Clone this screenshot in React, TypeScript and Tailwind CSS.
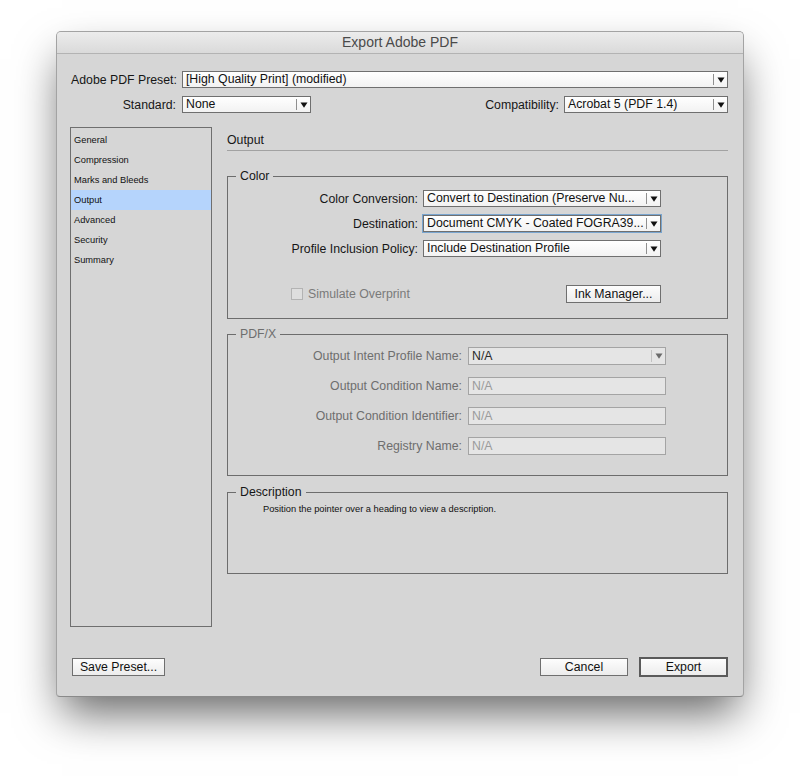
import clsx from "clsx";

const sans = "font-['Liberation_Sans',Arial,sans-serif]";

const sections = ["General", "Compression", "Marks and Bleeds", "Output", "Advanced", "Security", "Summary"];

function Arrow({ muted }: { muted?: boolean }) {
  return (
    <svg width="8" height="6" viewBox="0 0 8 6" className={muted ? "fill-[#6a6a6a]" : "fill-[#111111]"}>
      <path d="M0.5 0.5h7L4 5.8z" />
    </svg>
  );
}

function Select({
  value,
  className,
  focused,
  disabled,
}: {
  value: string;
  className?: string;
  focused?: boolean;
  disabled?: boolean;
}) {
  return (
    <div
      className={clsx(
        "flex items-stretch border",
        disabled
          ? "h-[18px] border-[#a4a4a4] bg-[#e5e5e5]"
          : "h-[17px] border-[#6f6f6f] bg-gradient-to-b from-white to-[#f2f2f2]",
        focused && "border-[#3e6d9c] shadow-[0_0_0_1px_#79a5cf]",
        className
      )}
    >
      <span
        className={clsx(
          "flex-1 truncate pl-[3px] text-[12.3px]",
          disabled ? "leading-[16px] text-[#2a2a2a]" : "leading-[15px] text-[#111111]"
        )}
      >
        {value}
      </span>
      <span className={clsx("my-[2px] w-px", disabled ? "bg-[#c2c2c2]" : "bg-[#8f8f8f]")} />
      <span className="flex w-[13px] items-center justify-center">
        <Arrow muted={disabled} />
      </span>
    </div>
  );
}

function Field({ value }: { value: string }) {
  return (
    <div className="h-[18px] w-[198px] border border-[#a4a4a4] bg-[#e5e5e5] pl-[3px] text-[12.3px] leading-[16px] text-[#9b9b9b]">
      {value}
    </div>
  );
}

function Button({ label, className, primary }: { label: string; className?: string; primary?: boolean }) {
  return (
    <button
      className={clsx(
        "flex items-center justify-center bg-gradient-to-b from-[#fdfdfd] to-[#ececec] text-[12.3px] text-[#111111]",
        primary ? "h-[20px] border-2 border-[#5a5a5a]" : "h-[18px] border border-[#6f6f6f]",
        className
      )}
    >
      {label}
    </button>
  );
}

export default function App() {
  return (
    <div className={clsx("min-h-[776px] bg-white pl-[56px] pt-[31px]", sans)}>
      <div className="w-[688px] overflow-hidden rounded-t-[5px] rounded-b-[4px] border border-[#a3a3a3] border-b-[#8a8a8a] bg-[#d6d6d6] shadow-[0_22px_42px_-6px_rgba(0,0,0,0.6)]">
        {/* Title bar */}
        <div className="flex h-[22px] items-center justify-center border-b border-[#b3b3b3] bg-gradient-to-b from-[#ececec] to-[#dadada] text-[14px] text-[#4a4a4a]">
          Export Adobe PDF
        </div>

        <div className="whitespace-nowrap pl-[14px] pr-[15px] pt-[17px] pb-[19px] text-[12.3px] leading-[16px] text-[#161616]">
          {/* Preset */}
          <div className="flex items-center gap-[5px]">
            <span className="shrink-0">Adobe PDF Preset:</span>
            <Select value="[High Quality Print] (modified)" className="flex-1" />
          </div>

          <div className="mt-[8px] flex items-center">
            <span className="w-[105px] text-right">Standard:</span>
            <Select value="None" className="ml-[6px] w-[129px]" />
            <span className="ml-auto">Compatibility:</span>
            <Select value="Acrobat 5 (PDF 1.4)" className="ml-[5px] w-[164px]" />
          </div>

          {/* Main */}
          <div className="-ml-[1px] mt-[14px] flex gap-[15px]">
            <div className="h-[500px] w-[142px] shrink-0 border border-[#6f6f6f] pt-[2px]">
              {sections.map((s) => (
                <div
                  key={s}
                  className={clsx("h-[20px] pl-[3px] text-[9.3px] leading-[20px] text-[#111111]", s === "Output" && "bg-[#b5d4fc]")}
                >
                  {s}
                </div>
              ))}
            </div>

            <div className="flex-1">
              <div className="border-b border-[#a2a2a2] pb-[3px] pt-[6px] leading-[14px]">Output</div>

              {/* Color */}
              <fieldset className="mt-[18px] border border-[#6d6d6d] pb-[15px] pt-[7px]">
                <legend className="ml-[8px] px-[4px] leading-[14px]">Color</legend>
                <div className="flex flex-col gap-[8px]">
                  <div className="flex items-center gap-[5px]">
                    <span className="w-[190px] text-right">Color Conversion:</span>
                    <Select value="Convert to Destination (Preserve Nu..." className="w-[238px]" />
                  </div>
                  <div className="flex items-center gap-[5px]">
                    <span className="w-[190px] text-right">Destination:</span>
                    <Select value="Document CMYK - Coated FOGRA39..." className="w-[238px]" focused />
                  </div>
                  <div className="flex items-center gap-[5px]">
                    <span className="w-[190px] text-right">Profile Inclusion Policy:</span>
                    <Select value="Include Destination Profile" className="w-[238px]" />
                  </div>
                </div>
                <div className="mt-[28px] flex items-center pl-[63px] pr-[66px]">
                  <span className="h-[12px] w-[12px] border border-[#b3b3b3] bg-[#dedede]" />
                  <span className="ml-[5px] text-[#7a7a7a]">Simulate Overprint</span>
                  <Button label="Ink Manager..." className="ml-auto h-[17px] w-[95px]" />
                </div>
              </fieldset>

              {/* PDF/X */}
              <fieldset className="mt-[8px] border border-[#6d6d6d] pb-[20px] pt-[6px] text-[#6e6e6e]">
                <legend className="ml-[8px] px-[4px] leading-[14px]">PDF/X</legend>
                <div className="flex flex-col gap-[12px]">
                  <div className="flex items-center gap-[6px]">
                    <span className="w-[234px] text-right">Output Intent Profile Name:</span>
                    <Select value="N/A" className="w-[198px]" disabled />
                  </div>
                  <div className="flex items-center gap-[6px]">
                    <span className="w-[234px] text-right">Output Condition Name:</span>
                    <Field value="N/A" />
                  </div>
                  <div className="flex items-center gap-[6px]">
                    <span className="w-[234px] text-right">Output Condition Identifier:</span>
                    <Field value="N/A" />
                  </div>
                  <div className="flex items-center gap-[6px]">
                    <span className="w-[234px] text-right">Registry Name:</span>
                    <Field value="N/A" />
                  </div>
                </div>
              </fieldset>

              {/* Description */}
              <fieldset className="mt-[9px] h-[89px] border border-[#6d6d6d] pl-[35px] pt-[4px]">
                <legend className="-ml-[27px] px-[4px] leading-[14px]">Description</legend>
                <p className="text-[9.3px] leading-[12px] text-[#111111]">
                  Position the pointer over a heading to view a description.
                </p>
              </fieldset>
            </div>
          </div>

          {/* Footer */}
          <div className="mt-[30px] flex items-center">
            <Button label="Save Preset..." className="ml-[1px] w-[93px]" />
            <Button label="Cancel" className="ml-auto w-[88px]" />
            <Button label="Export" className="ml-[11px] w-[89px]" primary />
          </div>
        </div>
      </div>
    </div>
  );
}
